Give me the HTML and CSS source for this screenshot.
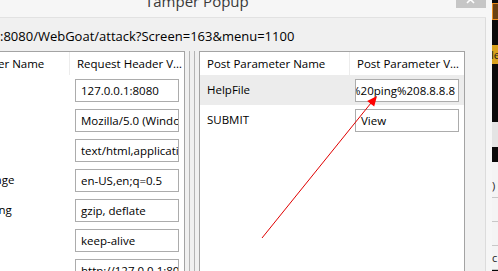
FILE: index.html
```html
<!DOCTYPE html>
<html lang="en">
<head>
    <meta charset="UTF-8">
    <title>Tamper Popup</title>
    <link rel="stylesheet" href="styles.css">
</head>
<body>
    <div class="screen">
        <div class="window">
            <div class="titlebar">
                <span class="title">Tamper Popup</span>
                <span class="close">
                    <svg width="30" height="8" viewBox="0 0 30 8">
                        <path d="M11 -4 L18 3 M18 -4 L11 3" stroke="#fff" stroke-width="1.6" fill="none"/>
                    </svg>
                </span>
            </div>
            <div class="client">
                <div class="url">:8080/WebGoat/attack?Screen=163&amp;menu=1100</div>
                <div class="panels">
                    <div class="panel panel-left">
                        <div class="row head">
                            <div class="name">Request Header Name</div>
                            <div class="value">Request Header V…</div>
                        </div>
                        <div class="row">
                            <div class="name">Host</div>
                            <div class="value"><div class="field">127.0.0.1:8080</div></div>
                        </div>
                        <div class="row">
                            <div class="name">User-Agent</div>
                            <div class="value"><div class="field">Mozilla/5.0 (Windows NT 6.2; WOW64)</div></div>
                        </div>
                        <div class="row">
                            <div class="name">Accept</div>
                            <div class="value"><div class="field">text/html,application/xhtml+xml</div></div>
                        </div>
                        <div class="row">
                            <div class="name">Accept-Language</div>
                            <div class="value"><div class="field">en-US,en;q=0.5</div></div>
                        </div>
                        <div class="row">
                            <div class="name">Accept-Encoding</div>
                            <div class="value"><div class="field">gzip, deflate</div></div>
                        </div>
                        <div class="row">
                            <div class="name">Connection</div>
                            <div class="value"><div class="field">keep-alive</div></div>
                        </div>
                        <div class="row">
                            <div class="name">Referer</div>
                            <div class="value"><div class="field">http://127.0.0.1:8080/WebGoat/attack</div></div>
                        </div>
                    </div>
                    <div class="splitter"></div>
                    <div class="panel">
                        <div class="row head">
                            <div class="name">Post Parameter Name</div>
                            <div class="value">Post Parameter V…</div>
                        </div>
                        <div class="row selected">
                            <div class="name">HelpFile</div>
                            <div class="value"><div class="field field-end"><span>AccessControlMatrix.help%22%20%26%20ping%208.8.8.8</span></div></div>
                        </div>
                        <div class="row">
                            <div class="name">SUBMIT</div>
                            <div class="value"><div class="field">View</div></div>
                        </div>
                    </div>
                </div>
            </div>
        </div>
        <div class="desktop">
            <div class="d-black d-top"></div>
            <div class="d-orange"></div>
            <div class="d-black d-gap"></div>
            <div class="d-gold">le</div>
            <div class="d-black d-long"></div>
            <div class="d-grey"></div>
            <div class="d-black d-short"></div>
            <div class="d-list">
                <div class="d-item">)</div>
                <div class="d-item"></div>
                <div class="d-item"></div>
                <div class="d-item">c</div>
            </div>
        </div>
        <svg class="arrow" width="498" height="271" viewBox="0 0 498 271">
            <line x1="262" y1="238" x2="371" y2="103" stroke="#e00000" stroke-width="1"/>
            <polygon points="377,96 374.2,106.6 367.2,101" fill="#ff0000"/>
        </svg>
    </div>
</body>
</html>
```

FILE: styles.css
```css
body {
    margin: 0;
    font-family: "Open Sans", "Noto Sans", sans-serif;
    color: #000;
}

.screen {
    position: relative;
    width: 498px;
    height: 271px;
    overflow: hidden;
    display: flex;
    background-color: #0a0a0a;
}

.window {
    width: 492px;
    flex: none;
    display: flex;
    flex-direction: column;
    background-color: #f6f6f6;
}

.titlebar {
    height: 17px;
    display: flex;
    align-items: flex-start;
    padding-left: 145px;
    border-bottom: 1px solid #e2e2e2;
    margin-right: 6px;
}

.title {
    font-size: 15px;
    line-height: 20px;
    margin-top: -9px;
    color: #3a3a3a;
}

.close {
    margin-left: auto;
    width: 30px;
    height: 8px;
    background-color: #c6c6c6;
    display: flex;
}

.client {
    flex: 1;
    margin-right: 6px;
    border-right: 1px solid #dcdcdc;
    background-color: #f0f0f0;
    overflow: hidden;
}

.url {
    font-size: 13px;
    line-height: 18px;
    padding-top: 9px;
    height: 24px;
    white-space: nowrap;
}

.panels {
    display: flex;
    margin-left: -85px;
}

.panel {
    width: 264px;
    height: 260px;
    flex: none;
    border: 1px solid #a3a3a3;
    border-bottom: none;
    background-color: #fff;
    font-size: 11.5px;
}

.panel-left {
    width: 268px;
}

.splitter {
    width: 4px;
    flex: none;
    margin: 0 4px;
    border-left: 1px solid #b4b4b4;
    border-right: 1px solid #b4b4b4;
}

.row {
    display: flex;
    height: 30px;
}

.row.head {
    height: 23px;
    align-items: center;
}

.row.selected {
    background-color: #ececec;
}

.name {
    width: 143px;
    padding-left: 7px;
    white-space: nowrap;
    overflow: hidden;
    line-height: 30px;
}

.panel-left .name {
    width: 147px;
}

.value {
    width: 114px;
    white-space: nowrap;
}

.head .name,
.head .value {
    line-height: 23px;
}

.head .value {
    padding-left: 7px;
    width: 107px;
    border-left: 1px solid #ececec;
    margin-left: -1px;
}

.field {
    box-sizing: border-box;
    width: 104px;
    height: 23px;
    margin: 4px 0 0 5px;
    padding: 0 4px 0 5px;
    border: 1px solid #acacac;
    background-color: #fff;
    line-height: 21px;
    overflow: hidden;
    white-space: nowrap;
}

.field-end {
    display: flex;
    justify-content: flex-end;
    padding-right: 3px;
}

.field-end span {
    flex: none;
}

.desktop {
    width: 6px;
    flex: none;
    font-size: 11px;
    overflow: hidden;
}

.d-black {
    background-color: #0a0a0a;
}

.d-top {
    height: 3px;
}

.d-orange {
    height: 15px;
    border: 1px solid #e88a1c;
    border-right: none;
    background-color: #6a4012;
}

.d-gap {
    height: 25px;
}

.d-gold {
    height: 19px;
    line-height: 19px;
    background-color: #d9a21e;
    color: #1a1a1a;
    margin-left: -1px;
}

.d-long {
    height: 58px;
}

.d-grey {
    height: 25px;
    background-color: #e4e4e4;
}

.d-short {
    height: 15px;
}

.d-list {
    background-color: #f4f4f4;
    padding-top: 12px;
}

.d-item {
    height: 23px;
    line-height: 23px;
    border-bottom: 1px solid #c8c8c8;
    color: #222;
}

.arrow {
    position: absolute;
    top: 0;
    left: 0;
    pointer-events: none;
}
```
